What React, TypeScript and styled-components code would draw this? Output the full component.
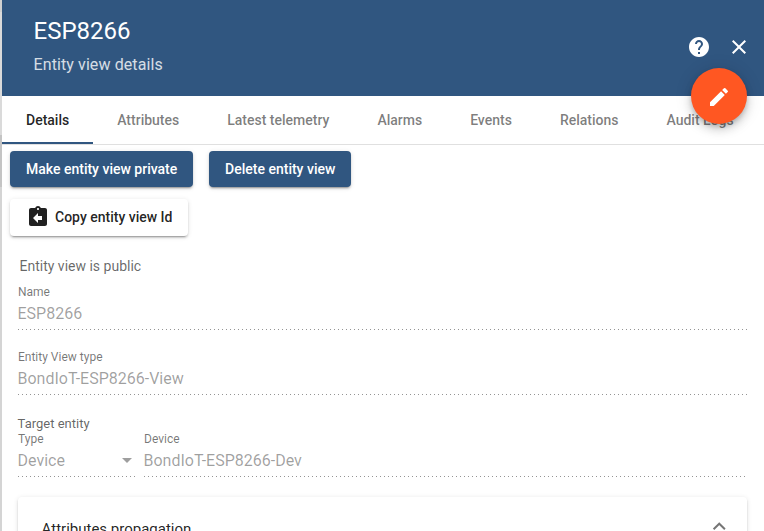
import React from "react";
import styled, { createGlobalStyle } from "styled-components";
import { MdHelp, MdClose, MdEdit, MdAssignmentReturn } from "react-icons/md";

const GlobalStyle = createGlobalStyle`
  * { box-sizing: border-box; }
  body {
    margin: 0;
    overflow: hidden;
    background: #fff;
    color: rgba(0, 0, 0, 0.87);
    font-family: Roboto, "Liberation Sans", sans-serif;
  }
`;

const Page = styled.div`
  display: flex;
  width: 764px;
  height: 531px;
  overflow: hidden;
`;

const Backdrop = styled.div`
  flex: 0 0 2px;
  display: flex;
  flex-direction: column;
`;

const BackdropBand = styled.div<{ $height?: number; $color: string }>`
  ${(p) => (p.$height ? `height: ${p.$height}px;` : "flex: 1;")}
  background: ${(p) => p.$color};
`;

const Panel = styled.main`
  flex: 1;
  min-width: 0;
  background: #fff;
`;

const Header = styled.header`
  position: relative;
  display: flex;
  justify-content: space-between;
  height: 96px;
  padding: 16px 13px 0 31.5px;
  background: #305680;
  color: #fff;
`;

const Title = styled.h1`
  margin: 0;
  font-size: 24px;
  font-weight: 400;
  line-height: 30px;
`;

const Subtitle = styled.div`
  margin-top: 9px;
  font-size: 16px;
  line-height: 20px;
  letter-spacing: 0.1px;
  opacity: 0.8;
`;

const HeaderActions = styled.div`
  display: flex;
  gap: 16px;
  height: 24px;
  margin-top: 19px;
  font-size: 24px;
`;

const EditButton = styled.button`
  position: absolute;
  z-index: 2;
  right: 17px;
  top: 68px;
  display: flex;
  align-items: center;
  justify-content: center;
  width: 56px;
  height: 56px;
  padding: 2px 0 0;
  border: 0;
  border-radius: 50%;
  background: #ff5722;
  color: #fff;
  font-size: 24px;
  box-shadow: 0 3px 5px -1px rgba(0, 0, 0, 0.2), 0 6px 10px rgba(0, 0, 0, 0.14),
    0 1px 18px rgba(0, 0, 0, 0.12);
`;

const Tabs = styled.nav`
  display: flex;
  height: 49px;
  border-bottom: 1px solid #e0e0e0;
`;

const Tab = styled.div<{ $active?: boolean }>`
  flex: none;
  height: 48px;
  padding: 0 24px;
  border-bottom: 2px solid ${(p) => (p.$active ? "#305680" : "transparent")};
  color: ${(p) => (p.$active ? "rgba(0,0,0,.87)" : "rgba(0,0,0,.52)")};
  font-size: 14px;
  font-weight: 500;
  line-height: 48px;
  white-space: nowrap;
`;

const Actions = styled.div`
  display: flex;
  flex-direction: column;
  gap: 12px;
  padding: 6px 8px 0;
`;

const ActionRow = styled.div`
  display: flex;
  gap: 16px;
`;

const ActionButton = styled.button<{ $primary?: boolean }>`
  display: flex;
  align-items: center;
  gap: 5px;
  height: ${(p) => (p.$primary ? 36 : 37)}px;
  padding: ${(p) => (p.$primary ? "0 15.8px 0 16px" : "0 16px 1px")};
  border: 0;
  border-radius: 4px;
  background: ${(p) => (p.$primary ? "#305680" : "#fff")};
  color: ${(p) => (p.$primary ? "#fff" : "rgba(0,0,0,.87)")};
  font: 500 14px/36px Roboto, sans-serif;
  white-space: nowrap;
  box-shadow: 0 3px 1px -2px rgba(0, 0, 0, 0.2), 0 2px 2px rgba(0, 0, 0, 0.14),
    0 1px 5px rgba(0, 0, 0, 0.12);

  svg { font-size: 24px; }
`;

const Form = styled.section`
  padding: 20px 17px 0 16px;
`;

const Status = styled.div`
  padding-left: 1.5px;
  height: 20px;
  color: rgba(0, 0, 0, 0.6);
  font-size: 14px;
  line-height: 20px;
`;

const FieldBox = styled.div<{ $width?: number; $gap?: number }>`
  ${(p) => (p.$width ? `flex: 0 0 ${p.$width}px;` : "flex: 1;")}
  height: 45px;
  margin-top: ${(p) => p.$gap ?? 0}px;
  background: repeating-linear-gradient(to right, #949494 0 1px, transparent 1px 4px) left bottom /
    100% 1px no-repeat;
`;

const Label = styled.div`
  height: 14px;
  color: rgba(0, 0, 0, 0.54);
  font-size: 12px;
  line-height: 14px;
`;

const Value = styled.div`
  display: flex;
  align-items: center;
  justify-content: space-between;
  height: 18px;
  margin-top: 6px;
  margin-left: -0.5px;
  padding-right: 4px;
  color: rgba(0, 0, 0, 0.38);
  font-size: 16px;
  line-height: 18px;
`;

const Caret = styled.span`
  margin-bottom: 2px;
  border: 5px solid transparent;
  border-top-color: currentColor;
  border-bottom: 0;
`;

const GroupLabel = styled.div`
  height: 16px;
  margin-top: 21px;
  margin-left: -0.4px;
  color: rgba(0, 0, 0, 0.62);
  font-size: 13px;
  line-height: 15px;
`;

const FieldRow = styled.div`
  display: flex;
  gap: 8px;
`;

const Accordion = styled.div`
  display: flex;
  align-items: center;
  justify-content: space-between;
  height: 64px;
  margin-top: 20px;
  padding: 0 24px 0 23.6px;
  border-radius: 4px;
  font-size: 15px;
  box-shadow: 0 3px 1px -2px rgba(0, 0, 0, 0.2), 0 2px 2px rgba(0, 0, 0, 0.14),
    0 1px 5px rgba(0, 0, 0, 0.12);
`;

const Chevron = styled.span`
  width: 8.5px;
  height: 8.5px;
  margin-bottom: 2px;
  border: solid rgba(0, 0, 0, 0.54);
  border-width: 2px 0 0 2px;
  transform: rotate(45deg);
`;

const tabs = ["Details", "Attributes", "Latest telemetry", "Alarms", "Events", "Relations", "Audit Logs"];

type FieldProps = { label: string; value: string; width?: number; gap?: number; select?: boolean };

const Field = ({ label, value, width, gap, select }: FieldProps) => (
  <FieldBox $width={width} $gap={gap}>
    <Label>{label}</Label>
    <Value>
      {value}
      {select && <Caret />}
    </Value>
  </FieldBox>
);

export default function App() {
  return (
    <Page>
      <GlobalStyle />
      <Backdrop>
        <BackdropBand $height={12} $color="#d0d0d0" />
        <BackdropBand $height={123} $color="#dadada" />
        <BackdropBand $height={52} $color="#c4c4c4" />
        <BackdropBand $color="#d4d4d4" />
      </Backdrop>
      <Panel>
        <Header>
          <div>
            <Title>ESP8266</Title>
            <Subtitle>Entity view details</Subtitle>
          </div>
          <HeaderActions>
            <MdHelp />
            <MdClose />
          </HeaderActions>
          <EditButton aria-label="Edit">
            <MdEdit />
          </EditButton>
        </Header>
        <Tabs>
          {tabs.map((name, i) => (
            <Tab key={name} $active={i === 0}>
              {name}
            </Tab>
          ))}
        </Tabs>
        <Actions>
          <ActionRow>
            <ActionButton $primary>Make entity view private</ActionButton>
            <ActionButton $primary>Delete entity view</ActionButton>
          </ActionRow>
          <ActionRow>
            <ActionButton>
              <MdAssignmentReturn />
              Copy entity view Id
            </ActionButton>
          </ActionRow>
        </Actions>
        <Form>
          <Status>Entity view is public</Status>
          <Field label="Name" value="ESP8266" gap={9} />
          <Field label="Entity View type" value="BondIoT-ESP8266-View" gap={20} />
          <GroupLabel>Target entity</GroupLabel>
          <FieldRow>
            <Field label="Type" value="Device" width={118} select />
            <Field label="Device" value="BondIoT-ESP8266-Dev" />
          </FieldRow>
          <Accordion>
            Attributes propagation
            <Chevron />
          </Accordion>
        </Form>
      </Panel>
    </Page>
  );
}
